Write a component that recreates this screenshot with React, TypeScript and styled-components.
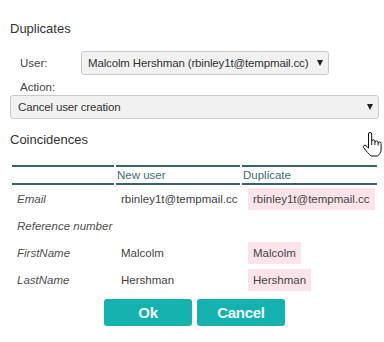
import React from 'react';
import styled, { createGlobalStyle } from 'styled-components';

const GlobalStyle = createGlobalStyle`
  html, body {
    margin: 0;
    padding: 0;
    background: #ffffff;
  }
  body {
    font-family: 'Liberation Sans', Arial, sans-serif;
    color: #3a3a3a;
  }
`;

const S = {
  Page: styled.div`
    position: relative;
    width: 384px;
    height: 342px;
    box-sizing: border-box;
    padding: 21px 5px 0 10px;
    overflow: hidden;
  `,
  SectionTitle: styled.h2<{ gap?: number }>`
    margin: ${({ gap }) => gap ?? 0}px 0 0;
    font-size: 13px;
    line-height: 16px;
    font-weight: normal;
    color: #333333;
  `,
  UserRow: styled.div`
    display: flex;
    align-items: center;
    margin-top: 14px;
    padding-left: 10px;
  `,
  FieldLabel: styled.span`
    width: 61px;
    font-size: 11.5px;
    color: #444444;
  `,
  ActionLabel: styled.div`
    margin-top: 5px;
    padding-left: 10px;
    font-size: 11.5px;
    line-height: 14px;
    color: #444444;
  `,
  Select: styled.div<{ width?: number; padLeft: number }>`
    display: flex;
    align-items: center;
    justify-content: space-between;
    box-sizing: border-box;
    width: ${({ width }) => (width ? `${width}px` : '100%')};
    height: 24px;
    margin-top: ${({ width }) => (width ? 0 : 1)}px;
    padding: 0 4px 0 ${({ padLeft }) => padLeft}px;
    border: 1px solid #cacaca;
    border-radius: 3px;
    background: #f1f1f1;
    font-size: 11.5px;
    letter-spacing: -0.15px;
    color: #333333;
    white-space: nowrap;
  `,
  Arrow: styled.span`
    width: 0;
    height: 0;
    margin-right: 1px;
    border-left: 3.5px solid transparent;
    border-right: 3.5px solid transparent;
    border-top: 6px solid #222222;
  `,
  Table: styled.table`
    margin-top: 17px;
    width: 369px;
    table-layout: fixed;
    border-collapse: separate;
    border-spacing: 2px 0;
    font-size: 11.5px;
  `,
  HeadCell: styled.th`
    height: 16px;
    padding: 0 1px;
    line-height: 16px;
    text-align: left;
    font-weight: normal;
    color: #3c6f78;
    border-top: 2px solid #36636d;
    border-bottom: 2px solid #36636d;
  `,
  Cell: styled.td<{ field?: boolean; pad: number }>`
    height: 27px;
    padding: 0 0 0 ${({ pad }) => pad}px;
    vertical-align: middle;
    white-space: nowrap;
    font-style: ${({ field }) => (field ? 'italic' : 'normal')};
    color: ${({ field }) => (field ? '#505050' : '#444444')};
  `,
  Match: styled.span`
    display: inline-block;
    padding: 0 5px;
    line-height: 22px;
    background: #fbe3e9;
    color: #444444;
  `,
  ButtonRow: styled.div`
    display: flex;
    justify-content: center;
    gap: 5px;
    margin-top: 6px;
  `,
  Button: styled.button`
    width: 88px;
    height: 27px;
    padding: 0;
    border: none;
    border-radius: 3px;
    background: #14b2af;
    color: #effcfc;
    font-family: 'Liberation Sans Narrow', 'Liberation Sans', Arial, sans-serif;
    font-weight: bold;
    font-size: 15px;
    letter-spacing: -0.3px;
    cursor: pointer;
  `,
  Cursor: styled.svg`
    position: absolute;
    left: 362px;
    top: 131px;
  `,
};

type Row = { field: string; value: string; duplicate?: string };

const rows: Row[] = [
  { field: 'Email', value: 'rbinley1t@tempmail.cc', duplicate: 'rbinley1t@tempmail.cc' },
  { field: 'Reference number', value: '' },
  { field: 'FirstName', value: 'Malcolm', duplicate: 'Malcolm' },
  { field: 'LastName', value: 'Hershman', duplicate: 'Hershman' },
];

const HandCursor = () => (
  <S.Cursor width="21" height="27" viewBox="0 0 21 27">
    <path
      d="M6.5 13 V3 A1.6 1.6 0 0 1 9.7 3 V10.5 A1.6 1.6 0 0 1 12.9 10.5 V11.5 A1.6 1.6 0 0 1 16.1 11.5 V12.5 A1.5 1.5 0 0 1 19.1 12.5 V18 C19.1 21.5 17.5 23.5 15.5 25 H9 C7 23 4 20 1.8 16.8 A1.5 1.5 0 0 1 4 14.7 L6.5 17 Z"
      fill="#ffffff"
      stroke="#111111"
      strokeWidth="1"
      strokeLinejoin="round"
    />
    <path d="M9.7 10.5 V14 M12.9 11.5 V14 M16.1 12.5 V14.5" stroke="#111111" strokeWidth="0.9" fill="none" />
  </S.Cursor>
);

const App = () => {
  return (
    <S.Page>
      <GlobalStyle />
      <S.SectionTitle>Duplicates</S.SectionTitle>
      <S.UserRow>
        <S.FieldLabel>User:</S.FieldLabel>
        <S.Select width={248} padLeft={6}>
          <span>Malcolm Hershman (rbinley1t@tempmail.cc)</span>
          <S.Arrow />
        </S.Select>
      </S.UserRow>
      <S.ActionLabel>Action:</S.ActionLabel>
      <S.Select padLeft={7}>
        <span>Cancel user creation</span>
        <S.Arrow />
      </S.Select>

      <S.SectionTitle gap={13}>Coincidences</S.SectionTitle>
      <S.Table>
        <colgroup>
          <col style={{ width: 102 }} />
          <col style={{ width: 124 }} />
          <col style={{ width: 135 }} />
        </colgroup>
        <thead>
          <tr>
            <S.HeadCell />
            <S.HeadCell>New user</S.HeadCell>
            <S.HeadCell>Duplicate</S.HeadCell>
          </tr>
        </thead>
        <tbody>
          {rows.map((row) => (
            <tr key={row.field}>
              <S.Cell field pad={5}>{row.field}</S.Cell>
              <S.Cell pad={5}>{row.value}</S.Cell>
              <S.Cell pad={6}>{row.duplicate && <S.Match>{row.duplicate}</S.Match>}</S.Cell>
            </tr>
          ))}
        </tbody>
      </S.Table>

      <S.ButtonRow>
        <S.Button>Ok</S.Button>
        <S.Button>Cancel</S.Button>
      </S.ButtonRow>

      <HandCursor />
    </S.Page>
  );
};

export default App;
